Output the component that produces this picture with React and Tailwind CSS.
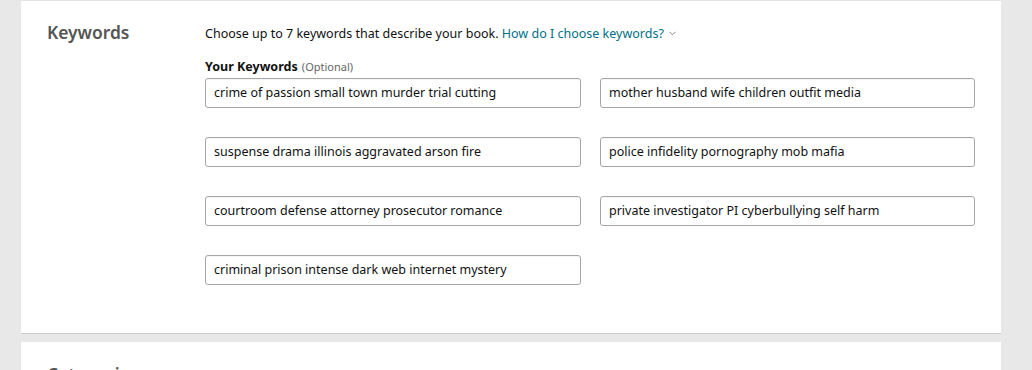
import React from "react";

const left = [
  "crime of passion small town murder trial cutting",
  "suspense drama illinois aggravated arson fire",
  "courtroom defense attorney prosecutor romance",
  "criminal prison intense dark web internet mystery",
];
const right = [
  "mother husband wife children outfit media",
  "police infidelity pornography mob mafia",
  "private investigator PI cyberbullying self harm",
];

function KwInput({ value }) {
  return (
    <div className="h-[30px] border border-[#a6a6a6] rounded-[3px] bg-white flex items-center pl-[8px] pt-[1px] text-[12.5px] text-[#111] shadow-[inset_0_1px_0_rgba(0,0,0,0.04)]">
      {value}
    </div>
  );
}

export default function App() {
  const rows = [0, 1, 2, 3];
  return (
    <div
      className="w-[1032px] h-[370px] overflow-hidden bg-[#e8e8e8] pl-[21px]"
      style={{ fontFamily: '"Noto Sans", "Open Sans", sans-serif' }}
    >
      <div className="w-[980px] bg-white border-t border-[#e3e3e3] border-b border-b-[#cccccc] h-[334px] flex">
        <div className="w-[184px] pl-[26px] pt-[18px]">
          <h2 className="text-[17.4px] font-semibold text-[#555] leading-[26px]">Keywords</h2>
        </div>
        <div className="pt-[23px]">
          <p className="text-[12.5px] text-[#111] leading-[20px]">
            Choose up to 7 keywords that describe your book.{" "}
            <span className="text-[#007185]">How do I choose keywords?</span>
            <svg className="inline-block ml-[5px] mb-[2px]" width="7" height="5" viewBox="0 0 7 5">
              <path d="M0.5 0.8 L3.5 3.8 L6.5 0.8" fill="none" stroke="#888" strokeWidth="1" />
            </svg>
          </p>
          <div className="mt-[14px] leading-[14px]">
            <span className="text-[12.5px] font-bold text-[#111]">Your Keywords</span>{" "}
            <span className="text-[11px] text-[#666]">(Optional)</span>
          </div>
          <div className="mt-[4px] grid grid-cols-[376px_375px] gap-x-[19px] gap-y-[29px]">
            {rows.map((i) => (
              <React.Fragment key={i}>
                <KwInput value={left[i]} />
                {right[i] ? <KwInput value={right[i]} /> : <div />}
              </React.Fragment>
            ))}
          </div>
        </div>
      </div>
      <div className="mt-[8px] w-[980px] bg-white h-[200px] flex">
        <div className="w-[184px] pl-[26px] pt-[19px]">
          <h2 className="text-[17.4px] font-semibold text-[#555] leading-[26px]">Categories</h2>
        </div>
        <div className="pt-[26px]">
          <p className="text-[12.5px] text-[#111] leading-[20px]">
            Choose up to two browse categories.{" "}
            <span className="text-[#007185]">Why are categories important?</span>
          </p>
        </div>
      </div>
    </div>
  );
}
